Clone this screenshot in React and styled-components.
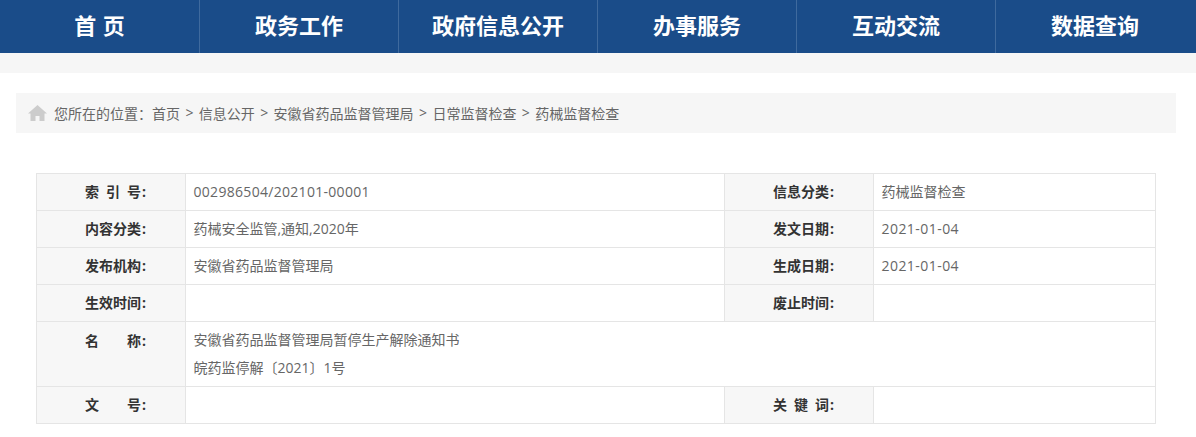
import React from "react"
import styled, { createGlobalStyle } from "styled-components"

const GlobalStyle = createGlobalStyle`
  html, body {
    margin: 0;
    padding: 0;
    background: #fff;
    font-family: "Open Sans", "Noto Sans CJK SC", sans-serif;
    overflow: hidden;
  }
`

const Nav = styled.nav`
  display: grid;
  grid-template-columns: repeat(6, 199px) 1fr;
  height: 53px;
  background: #1a4c89;
`
const NavItem = styled.a`
  display: flex;
  align-items: center;
  justify-content: center;
  padding-bottom: 6px;
  font-size: 22px;
  font-weight: 700;
  word-spacing: 1px;
  color: #fff;
  white-space: pre;
  box-sizing: border-box;
  border-left: ${p => (p.$first ? "none" : "1px solid #3f6a9e")};
`
const Band = styled.div`
  height: 20px;
  background: #f6f6f6;
`
const Crumbs = styled.div`
  display: flex;
  align-items: center;
  box-sizing: border-box;
  height: 40px;
  margin: 20px 20px 0 16px;
  padding: 0 0 1px 12px;
  background: #f6f6f6;
  font-size: 14px;
  color: #666;
  white-space: pre;
`
const HomeIcon = styled.svg`
  width: 19px;
  height: 16px;
  margin-right: 7px;
  fill: #ccc;
`
const Sep = styled.span`
  margin: 0 5.4px;
`
const Table = styled.table`
  border-collapse: collapse;
  table-layout: fixed;
  width: 1119px;
  margin: 40px 0 0 36px;
  font-size: 14px;
  color: #666;
`
const Row = styled.tr`
  height: ${p => p.$height || 37}px;
`
const LabelCell = styled.th`
  box-sizing: border-box;
  border: 1px solid #e5e5e5;
  background: #f7f7f7;
  padding: ${p => (p.$top ? "8px 0 0 48px" : "0 0 2px 48px")};
  vertical-align: ${p => (p.$top ? "top" : "middle")};
  text-align: left;
  font-weight: 700;
  color: #333;
  white-space: nowrap;
`
const LabelText = styled.span`
  display: inline-block;
  width: 56px;
  margin-right: 1px;
  text-align-last: justify;
`
const ValueCell = styled.td`
  box-sizing: border-box;
  border: 1px solid #e5e5e5;
  padding: 0 7px ${p => (p.$lines ? 0 : 2)}px 7.5px;
  white-space: nowrap;
  letter-spacing: ${p => p.$tracking || 0}px;
`
const TextLine = styled.div`
  line-height: 28px;
`

const navItems = ["首 页", "政务工作", "政府信息公开", "办事服务", "互动交流", "数据查询"]
const crumbs = ["首页", "信息公开", "安徽省药品监督管理局", "日常监督检查", "药械监督检查"]

function Label({ text, top }) {
  return (
    <LabelCell $top={top}>
      <LabelText>{text}</LabelText>:
    </LabelCell>
  )
}

export default function App() {
  return (
    <>
      <GlobalStyle />
      <Nav>
        {navItems.map((item, i) => (
          <NavItem key={item} $first={i === 0}>{item}</NavItem>
        ))}
      </Nav>
      <Band />
      <Crumbs>
        <HomeIcon viewBox="0 0 19 16">
          <path d="M9.5 0 L19 8.5 L16.5 8.5 L16.5 16 L11.5 16 L11.5 11 L7.5 11 L7.5 16 L2.5 16 L2.5 8.5 L0 8.5 Z" />
        </HomeIcon>
        您所在的位置：
        {crumbs.map((c, i) => (
          <React.Fragment key={c}>
            {i > 0 && <Sep>&gt;</Sep>}
            {c}
          </React.Fragment>
        ))}
      </Crumbs>
      <Table>
        <colgroup>
          <col width="149" />
          <col width="539" />
          <col width="149" />
          <col width="282" />
        </colgroup>
        <tbody>
          <Row>
            <Label text="索引号" />
            <ValueCell $tracking={0.3}>002986504/202101-00001</ValueCell>
            <Label text="信息分类" />
            <ValueCell>药械监督检查</ValueCell>
          </Row>
          <Row>
            <Label text="内容分类" />
            <ValueCell>药械安全监管,通知,2020年</ValueCell>
            <Label text="发文日期" />
            <ValueCell $tracking={0.45}>2021-01-04</ValueCell>
          </Row>
          <Row>
            <Label text="发布机构" />
            <ValueCell>安徽省药品监督管理局</ValueCell>
            <Label text="生成日期" />
            <ValueCell $tracking={0.45}>2021-01-04</ValueCell>
          </Row>
          <Row>
            <Label text="生效时间" />
            <ValueCell />
            <Label text="废止时间" />
            <ValueCell />
          </Row>
          <Row $height={65}>
            <Label text="名称" top />
            <ValueCell colSpan={3} $lines>
              <TextLine>安徽省药品监督管理局暂停生产解除通知书</TextLine>
              <TextLine>皖药监停解〔2021〕1号</TextLine>
            </ValueCell>
          </Row>
          <Row>
            <Label text="文号" />
            <ValueCell />
            <Label text="关键词" />
            <ValueCell />
          </Row>
        </tbody>
      </Table>
    </>
  )
}
